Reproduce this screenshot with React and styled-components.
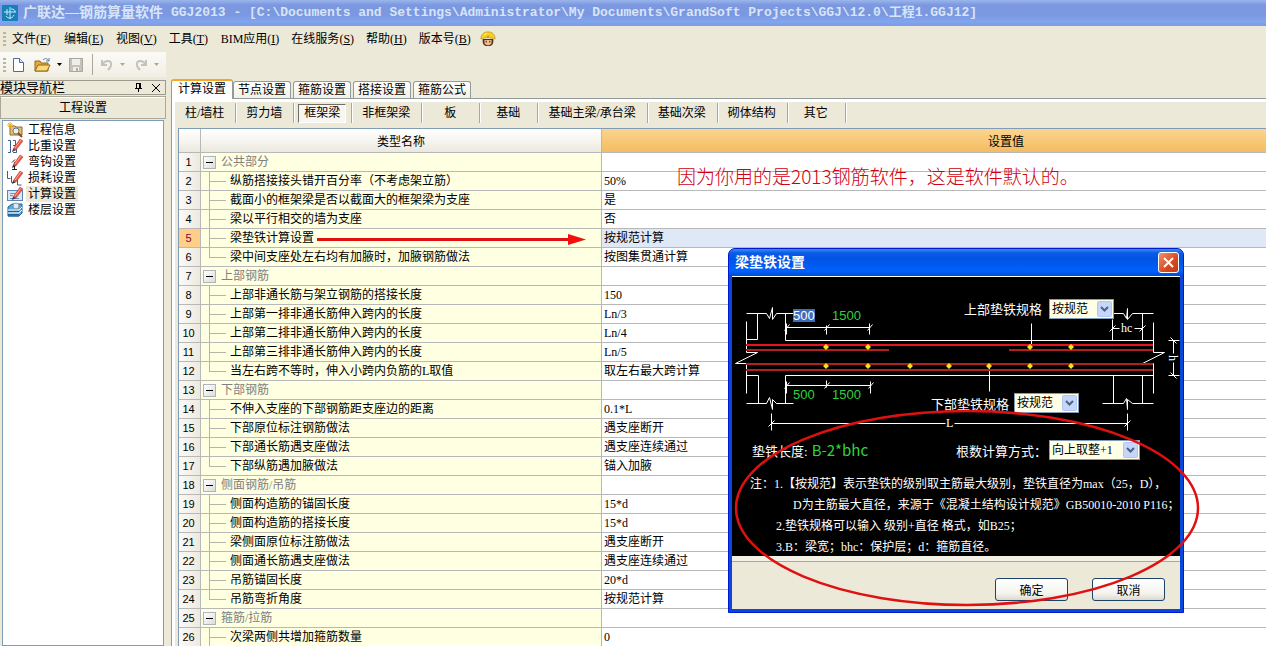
import React from "react";
import styled, { createGlobalStyle, css } from "styled-components";

const GlobalStyle = createGlobalStyle`
  * {
    box-sizing: border-box;
  }

  body {
    margin: 0;
    overflow: hidden;
    background-color: #ece9d8;
  }

  body, button, input, select {
    font-family: "Liberation Serif", "Noto Sans CJK SC", serif;
    font-size: 12px;
    color: #000;
  }
`;

const Window = styled.div`
  position: relative;
  width: 100%;
  height: 100vh;
  overflow: hidden;
  display: flex;
  flex-direction: column;
`;

const TitleBar = styled.header`
  flex: none;
  height: 26px;
  display: flex;
  align-items: center;
  gap: 5px;
  padding-left: 2px;
  background: linear-gradient(
    #9bb6ec 0,
    #7b98e0 5px,
    #7a97e0 14px,
    #82a4ee 22px,
    #7b9ae2 26px
  );
  color: #d8e4f8;
  white-space: nowrap;
`;

const AppName = styled.span`
  font-size: 14px;
  line-height: 20px;
  font-weight: 700;
`;

const AppPath = styled.span`
  padding-left: 3px;
  font-family: "Liberation Mono", "Noto Sans CJK SC", monospace;
  font-size: 13px;
  line-height: 20px;
  font-weight: 700;
  white-space: pre;
`;

const MenuBar = styled.nav`
  flex: none;
  height: 26px;
  display: flex;
  align-items: center;
  padding-left: 3px;
`;

const Grip = styled.span`
  width: 3px;
  height: 14px;
  background: repeating-linear-gradient(#b9b5a2 0 2px, transparent 2px 4px);
`;

const MenuButton = styled.button`
  min-width: 52px;
  padding: 0 6px;
  border: 0;
  background: none;
  text-align: left;
  line-height: 20px;
  white-space: nowrap;
`;

const HelperButton = styled.button`
  margin-left: 3px;
  padding: 0;
  border: 0;
  background: none;
  display: flex;
`;

const ToolBar = styled.div`
  flex: none;
  align-self: flex-start;
  height: 25px;
  width: 166px;
  display: flex;
  align-items: center;
  padding-left: 3px;
  background: linear-gradient(#fbfaf7, #f1efe4);
`;

const ToolButton = styled.button`
  width: ${({ $wide }) => ($wide ? "34px" : "24px")};
  height: 22px;
  padding: 0 0 0 4px;
  border: 0;
  background: none;
  display: flex;
  align-items: center;
  gap: 5px;
`;

const ToolDivider = styled.span`
  width: 1px;
  height: 21px;
  margin: 0 2px 0 4px;
  background-color: #aca899;
`;

const Body = styled.div`
  flex: 1;
  min-height: 0;
  display: flex;
  gap: 5px;
  padding-top: 3px;
`;

const SidePanel = styled.aside`
  flex: none;
  width: 166px;
  display: flex;
  flex-direction: column;
  gap: 1px;
`;

const SideHeader = styled.div`
  height: 15px;
  display: flex;
  align-items: center;
  border: 1px solid #9c9a8c;
  border-left: 0;
  line-height: 13px;
`;

const SideTitle = styled.span`
  flex: 1;
  font-size: 13px;
`;

const SideIcon = styled.button`
  width: 18px;
  height: 13px;
  padding: 0;
  border: 0;
  background: none;
  display: flex;
  align-items: center;
  justify-content: center;
`;

const SideGroup = styled.button`
  height: 23px;
  padding: 0;
  border: 1px solid #aca899;
  background-color: #ece9d8;
  box-shadow: inset 0 1px #fff;
  line-height: 20px;
`;

const SideList = styled.ul`
  flex: 1;
  margin: 0 2px;
  padding: 1px 0 0 4px;
  list-style: none;
  background-color: #fff;
  border: 1px solid #7f9db9;
`;

const SideItem = styled.li`
  height: 16px;
  display: flex;
  align-items: center;
  gap: 3px;
`;

const SideLink = styled.a`
  padding: 0 2px;
  line-height: 16px;
  color: #000;
  text-decoration: none;
  background-color: ${({ $active }) => ($active ? "#ece9d8" : "transparent")};
`;

const Content = styled.main`
  flex: 1;
  min-width: 0;
  display: flex;
  flex-direction: column;
`;

const Tabs = styled.div`
  flex: none;
  display: flex;
  align-items: flex-end;
  gap: 2px;
  height: 18px;
`;

const Tab = styled.button`
  height: 17px;
  padding: 0 4px;
  border: 1px solid #919b9c;
  border-bottom: 0;
  border-radius: 3px 3px 0 0;
  background: linear-gradient(#fff, #f1f0e8);
  line-height: 16px;
  white-space: nowrap;

  ${({ $active }) =>
    $active &&
    css`
      height: 20px;
      margin: 0 -2px -1px 0;
      padding: 0 6px 2px;
      border-top: 2px solid #f5a623;
      background: #fff;
      z-index: 1;
    `}
`;

const TabPage = styled.section`
  flex: 1;
  min-height: 0;
  display: flex;
  flex-direction: column;
  border: 1px solid #919b9c;
  border-width: 1px 0 0 1px;
  box-shadow: inset 3px 3px #fff;
  padding: 3px 0 0 3px;
`;

const SubNav = styled.div`
  flex: none;
  height: 26px;
  display: flex;
  align-items: center;
  padding-bottom: 4px;
`;

const SubCell = styled.div`
  min-width: 58px;
  height: 20px;
  display: flex;
  align-items: center;
  justify-content: center;
  padding: 0 4px 0 3px;
  border-right: 1px solid #aca899;
  box-shadow: 1px 0 #fff;
`;

const SubButton = styled.button`
  height: 19px;
  padding: 0 6px;
  border: 1px solid transparent;
  background: none;
  line-height: 17px;
  white-space: nowrap;

  ${({ $active }) =>
    $active &&
    css`
      padding: 0 5px;
      border-color: #716f64 #fff #fff #716f64;
      background-color: #f7f6f0;
    `}
`;

const GridFrame = styled.div`
  flex: 1;
  min-height: 0;
  overflow: hidden;
  margin-left: 3px;
  border: 1px solid #7f9db9;
  border-width: 1px 0 0 1px;
  background-color: #fff;
`;

const Grid = styled.table`
  width: 100%;
  table-layout: fixed;
  border-collapse: separate;
  border-spacing: 0;
`;

const NumberCol = styled.col`
  width: 22px;
`;

const NameCol = styled.col`
  width: 401px;
`;

const HeadCell = styled.th`
  height: 24px;
  padding: 0;
  font-weight: 400;
  border-right: 1px solid #b8b8b8;
  border-bottom: 1px solid #b8b8b8;
  background: linear-gradient(#fff, #f6f5f0 50%, #ebe9dd);

  ${({ $accent }) =>
    $accent &&
    css`
      padding-left: 144px;
      border-right: 0;
      background: linear-gradient(#fbd48e, #f3bd60);
    `}
`;

const cell = css`
  height: 19px;
  padding: 0;
  border-right: 1px solid #b8b8b8;
  border-bottom: 1px solid #b8b8b8;
  line-height: 18px;
  white-space: nowrap;
`;

const NumberCell = styled.th`
  ${cell}
  padding-right: 2px;
  font-family: "Liberation Sans", sans-serif;
  font-size: 11px;
  font-weight: 400;
  text-align: center;
  color: ${({ $active }) => ($active ? "#800040" : "#000")};
  background: ${({ $active }) =>
    $active ? "#ffcf88" : "linear-gradient(90deg, #fbfaf8, #eceadf)"};
`;

const NameCell = styled.td`
  ${cell}
  background-color: #ffffe1;
`;

const ValueCell = styled.td`
  ${cell}
  padding-left: 2px;
  border-right: 0;
  background-color: ${({ $active }) => ($active ? "#dfe8f6" : "#fff")};
`;

const NameRow = styled.div`
  height: 18px;
  display: flex;
  align-items: center;
  color: ${({ $group }) => ($group ? "#808080" : "#000")};
`;

const Toggle = styled.button`
  width: 13px;
  height: 13px;
  margin: 0 5px 0 2px;
  padding: 0;
  border: 1px solid #aeb4bc;
  background: linear-gradient(135deg, #fff, #dcdcdc);
  display: flex;
  align-items: center;
  justify-content: center;

  &::after {
    content: "";
    width: 7px;
    height: 1px;
    background-color: #000;
  }
`;

const Branch = styled.span`
  width: 17px;
  height: 100%;
  margin: 0 4px 0 8px;
  background: linear-gradient(#b4b4a8, #b4b4a8) 0 0 / 1px
      ${({ $last }) => ($last ? "9px" : "100%")} no-repeat,
    linear-gradient(#b4b4a8, #b4b4a8) 0 9px / 100% 1px no-repeat;
`;

const Remark = styled.p`
  position: absolute;
  left: 677px;
  top: 163px;
  margin: 0;
  font-family: "Noto Sans CJK SC", sans-serif;
  font-size: 19px;
  line-height: 26px;
  font-weight: 300;
  color: #d00010;
  white-space: nowrap;
`;

const Markup = styled.svg`
  position: absolute;
  left: 0;
  top: 0;
  pointer-events: none;
`;

const Dialog = styled.div`
  position: absolute;
  left: 728px;
  top: 248px;
  width: 456px;
  display: flex;
  flex-direction: column;
  padding: 0 3px 3px;
  border: 1px solid #0019cf;
  border-radius: 7px 7px 0 0;
  background-color: #0a48dc;
`;

const DialogTitle = styled.div`
  height: 27px;
  margin: 0 -3px;
  display: flex;
  align-items: center;
  justify-content: space-between;
  padding: 0 4px 0 6px;
  border-radius: 6px 6px 0 0;
  background: linear-gradient(
    #3f8cf3 0,
    #0a5be8 4px,
    #0054e3 10px,
    #0061fc 22px,
    #0049d4 27px
  );
  color: #fff;
  font-size: 14px;
  line-height: 20px;
  font-weight: 700;
`;

const CloseButton = styled.button`
  width: 21px;
  height: 21px;
  padding: 0;
  border: 1px solid #fff;
  border-radius: 3px;
  background: linear-gradient(135deg, #f0916f, #d8481f 60%, #c23a12);
  display: flex;
  align-items: center;
  justify-content: center;
`;

const Board = styled.div`
  position: relative;
  border-top: 1px solid #fff;
  background-color: #000;
  color: #fff;
`;

const Drawing = styled.svg`
  display: block;
  width: 100%;
  height: 158px;
`;

const Placed = styled.div`
  position: absolute;
  left: ${({ $x }) => $x}px;
  top: ${({ $y }) => $y}px;
`;

const SelectBox = styled.div`
  position: relative;
  width: ${({ $wide }) => ($wide ? "91px" : "65px")};

  svg {
    position: absolute;
    right: 2px;
    top: 2px;
    pointer-events: none;
  }
`;

const Select = styled.select`
  display: block;
  width: 100%;
  height: 20px;
  padding: 0 0 0 2px;
  border: 1px solid #7f9db9;
  border-radius: 0;
  background-color: #ffffe8;
  appearance: none;
`;

const Fields = styled.div`
  display: flex;
  align-items: center;
  height: 30px;
  padding-left: 20px;
  font-size: 13px;
`;

const LengthField = styled.div`
  width: 204px;
  display: flex;
  align-items: center;
  gap: 4px;
`;

const LengthInput = styled.input`
  width: 90px;
  padding: 0;
  border: 0;
  background: none;
  color: #2fd43a;
  font-family: "Noto Sans CJK SC", sans-serif;
  font-size: 15px;
  line-height: 20px;
`;

const MethodLabel = styled.label`
  width: 93px;
`;

const Notes = styled.div`
  height: 91px;
  padding: 9px 0 0 18px;
`;

const Note = styled.p`
  margin: 0;
  padding-left: ${({ $indent }) => $indent || 0}px;
  line-height: 21px;
  white-space: pre;
`;

const DialogFooter = styled.div`
  display: flex;
  justify-content: flex-end;
  gap: 24px;
  padding: 17px 15px 8px;
  border-top: 5px solid #f3f1e6;
  box-shadow: inset 0 1px #aca899;
  background-color: #ece9d8;
`;

const DialogButton = styled.button`
  width: 73px;
  height: 23px;
  padding: 0;
  border: 1px solid #1c4468;
  border-radius: 3px;
  background: linear-gradient(#fff, #f4f3ee 70%, #dcd8cc);
`;

const menus = [
  ["文件", "F"],
  ["编辑", "E"],
  ["视图", "V"],
  ["工具", "T"],
  ["BIM应用", "I"],
  ["在线服务", "S"],
  ["帮助", "H"],
  ["版本号", "B"],
];

const tabs = ["计算设置", "节点设置", "箍筋设置", "搭接设置", "箍筋公式"];

const parts = [
  "柱/墙柱",
  "剪力墙",
  "框架梁",
  "非框架梁",
  "板",
  "基础",
  "基础主梁/承台梁",
  "基础次梁",
  "砌体结构",
  "其它",
];

const groups = [
  {
    name: "公共部分",
    rows: [
      ["纵筋搭接接头错开百分率（不考虑架立筋）", "50%"],
      ["截面小的框架梁是否以截面大的框架梁为支座", "是"],
      ["梁以平行相交的墙为支座", "否"],
      ["梁垫铁计算设置", "按规范计算"],
      ["梁中间支座处左右均有加腋时，加腋钢筋做法", "按图集贯通计算"],
    ],
  },
  {
    name: "上部钢筋",
    rows: [
      ["上部非通长筋与架立钢筋的搭接长度", "150"],
      ["上部第一排非通长筋伸入跨内的长度", "Ln/3"],
      ["上部第二排非通长筋伸入跨内的长度", "Ln/4"],
      ["上部第三排非通长筋伸入跨内的长度", "Ln/5"],
      ["当左右跨不等时，伸入小跨内负筋的L取值", "取左右最大跨计算"],
    ],
  },
  {
    name: "下部钢筋",
    rows: [
      ["不伸入支座的下部钢筋距支座边的距离", "0.1*L"],
      ["下部原位标注钢筋做法", "遇支座断开"],
      ["下部通长筋遇支座做法", "遇支座连续通过"],
      ["下部纵筋遇加腋做法", "锚入加腋"],
    ],
  },
  {
    name: "侧面钢筋/吊筋",
    rows: [
      ["侧面构造筋的锚固长度", "15*d"],
      ["侧面构造筋的搭接长度", "15*d"],
      ["梁侧面原位标注筋做法", "遇支座断开"],
      ["侧面通长筋遇支座做法", "遇支座连续通过"],
      ["吊筋锚固长度", "20*d"],
      ["吊筋弯折角度", "按规范计算"],
    ],
  },
  {
    name: "箍筋/拉筋",
    rows: [["次梁两侧共增加箍筋数量", "0"]],
  },
];

// flat list of table rows, group heads included
const rows = groups.flatMap(({ name, rows: items }) => [
  { name, group: true, value: "" },
  ...items.map(([label, value], i) => ({
    name: label,
    value,
    last: items.length > 1 && i === items.length - 1,
  })),
]);

const Pencil = () => (
  <>
    <path d="M6 11L13 1L16 3L9 12Z" fill="#e8574a" stroke="#b5362c" strokeWidth=".5" />
    <path d="M6 11L9 12L5 14Z" fill="#333" />
    <path d="M8 10L14 2" stroke="#f7a79c" />
  </>
);

const sideItems = [
  {
    label: "工程信息",
    icon: (
      <>
        <path d="M3 4h5l1 1h6v8H3z" fill="#e2bf72" stroke="#8f6d2d" />
        <path d="M0 3h6M3 0v6M1 1l4 4M5 1L1 5" stroke="#f0b51c" />
        <circle cx="9" cy="9" r="3" fill="#e6f2fb" stroke="#6d7780" />
        <path d="M11 11l4 4" stroke="#8a4a1c" strokeWidth="2" />
      </>
    ),
  },
  {
    label: "比重设置",
    icon: (
      <>
        <path d="M1 2.500h2.500v12H1M6 2.500h2.500v5H6M6 14.500h3.500V9" fill="none" stroke="#3d5c8c" />
        <Pencil />
      </>
    ),
  },
  {
    label: "弯钩设置",
    icon: (
      <>
        <path d="M7.500 8v7M5 15.500h5M5 8.500l3-3" fill="none" stroke="#222" />
        <Pencil />
      </>
    ),
  },
  {
    label: "损耗设置",
    icon: (
      <>
        <path d="M.5 1v7.500h3M4.500 6v6.500h3M10.500 9v6h4" fill="none" stroke="#3d5c8c" />
        <Pencil />
      </>
    ),
  },
  {
    label: "计算设置",
    icon: (
      <>
        <rect x=".5" y="4.500" width="15" height="10" fill="#d7e7fa" stroke="#5d84b8" />
        <path d="M3 7.500h5M3 9.500h3M3 12.500h9" stroke="#6f93c4" />
        <Pencil />
      </>
    ),
  },
  {
    label: "楼层设置",
    icon: (
      <>
        <path d="M1 5l4-3h10v9l-3 3H1z" fill="#5aa5d8" stroke="#1f5f98" />
        <path d="M1 8h11l3-3M1 11h11l3-3" fill="none" stroke="#fff" />
        <path d="M1 14h11l3-3M1 9.500h11M1 12.500h11" fill="none" stroke="#1f5f98" />
        <circle cx="9" cy="4" r="3" fill="#dbe9f5" stroke="#8797a6" />
      </>
    ),
  },
];

const AppIcon = () => (
  <svg width="16" height="16" viewBox="0 0 16 16">
    <rect width="16" height="16" rx="1" fill="#1780b8" />
    <path d="M8 2v12M2 7h12M5 4v6M4 11c2 3 6 3 8-1M9 4c3 0 4 1 4 3" fill="none" stroke="#c5ecf6" />
  </svg>
);

const Worker = () => (
  <svg width="16" height="16" viewBox="0 0 18 18">
    <path d="M3 9h12v3c0 3-2 5-6 5s-6-2-6-5z" fill="#5a2d18" />
    <path d="M5 10h8v3c0 2-2 3-4 3s-4-1-4-3z" fill="#f0bf94" />
    <path d="M7 11v2M11 11v2" stroke="#2a1408" />
    <path d="M1 9C1 4 4 1 9 1s8 3 8 8c-4-2-12-2-16 0z" fill="#f5d21e" stroke="#b8860b" strokeWidth=".7" />
    <path d="M5 4c1-1 2-1 3-1" stroke="#fff8b8" fill="none" />
    <path d="M8 6h2" stroke="#c43" />
  </svg>
);

const Caret = ({ muted }) => (
  <svg width="5" height="3" viewBox="0 0 5 3">
    <path d="M0 0h5L2.500 3z" fill={muted ? "#aca899" : "#000"} />
  </svg>
);

const ComboArrow = () => (
  <svg width="15" height="16" viewBox="0 0 15 16">
    <rect x=".5" y=".5" width="14" height="15" rx="1" fill="#c6d6fb" stroke="#b3c6f2" />
    <path d="M4 6l3.500 3.500L11 6" fill="none" stroke="#4d6185" strokeWidth="2" />
  </svg>
);

const Combo = ({ id, label, value, wide }) => (
  <SelectBox $wide={wide}>
    <Select id={id} aria-label={label} defaultValue={value}>
      <option>{value}</option>
    </Select>
    <ComboArrow />
  </SelectBox>
);

const upperDots = [94, 136, 298, 339];
const lowerDots = [94, 136, 178, 217, 257, 298, 339];

const Dot = ({ x, y }) => (
  <path d={`M${x - 3} ${y}l3 -3l3 3l-3 3z`} fill="#ffe11a" />
);

const BeamDrawing = () => (
  <Drawing viewBox="0 0 448 158">
    <g fill="none" stroke="#fff" transform="translate(.5 .5)">
      {/* left column */}
      <path d="M14 36H34L37 41L40 30V42L44 36H61M25 36V62H14" />
      <path d="M14 44V75H25L3 86H14V116" />
      <path d="M14 98H26V126M14 126H34L37 120L40 132V122L44 126H61" />
      {/* beam faces */}
      <path d="M53 36V63H421M53 126V98H421" />
      {/* right column */}
      <path d="M374 36H391L394 41L395 31V42L400 36H421M380 42V63M410 36V63" />
      <path d="M421 45V75H432L410 86H421V116" />
      <path d="M370 126H391L394 121L395 132V122L400 126H421M381 98V126M410 98V126" />
      {/* dimensions */}
      <path d="M54 50H137M54 46V57M94 48V57M137 46V57M52 53l5 -6M92 53l5 -6M135 53l5 -6" />
      <path d="M54 108H138M54 104V116M94 103V110M138 104V116M52 111l5 -6M92 111l5 -6M136 111l5 -6" />
      <path d="M39 146H213M222 146H395M39 136V153M395 136V153M36 149l6 -6M392 149l6 -6" />
      <path d="M380 51H387M402 51H410M377 54l6 -6M407 54l6 -6" />
      <path d="M441 63V76M441 85V98M436 63H447M436 98H447M438 60l6 6M438 95l6 6" />
      <path d="M299 46V69M257 90V114" />
    </g>
    <g strokeWidth="2">
      <path d="M14 68H421" stroke="#e8141c" />
      <path d="M14 73H157M277 73H421M14 87H421M14 93H421" stroke="#b0201f" />
    </g>
    {upperDots.map((x) => (
      <Dot key={x} x={x} y={70} />
    ))}
    {lowerDots.map((x) => (
      <Dot key={x} x={x} y={89} />
    ))}
    <rect x="61" y="32" width="22" height="13" fill="#3e6cb8" />
    <g fontFamily="Liberation Sans" fontSize="13" fill="#2fd43a">
      <text x="61" y="43" fill="#fff">500</text>
      <text x="100" y="43">1500</text>
      <text x="61" y="122">500</text>
      <text x="100" y="122">1500</text>
    </g>
    <g fontSize="13" fill="#fff">
      <text x="232" y="37">上部垫铁规格</text>
      <text x="199" y="132">下部垫铁规格</text>
    </g>
    <g fontSize="12" fill="#fff">
      <text x="389" y="55">hc</text>
      <text x="214" y="150">L</text>
      <text x="0" y="0" transform="translate(437 78) rotate(90)">h</text>
    </g>
  </Drawing>
);

const BeamDialog = () => (
  <Dialog role="dialog" aria-labelledby="dialog-title">
    <DialogTitle>
      <span id="dialog-title">梁垫铁设置</span>
      <CloseButton aria-label="关闭">
        <svg width="13" height="13" viewBox="0 0 13 13">
          <path d="M2 2l9 9M11 2l-9 9" stroke="#fff" strokeWidth="2" />
        </svg>
      </CloseButton>
    </DialogTitle>
    <Board>
      <BeamDrawing />
      <Placed $x={317} $y={22}>
        <Combo label="上部垫铁规格" value="按规范" />
      </Placed>
      <Placed $x={282} $y={116}>
        <Combo label="下部垫铁规格" value="按规范" />
      </Placed>
      <Fields>
        <LengthField>
          <label htmlFor="length">垫铁长度:</label>
          <LengthInput id="length" defaultValue="B-2*bhc" />
        </LengthField>
        <MethodLabel htmlFor="method">根数计算方式：</MethodLabel>
        <Combo id="method" value="向上取整+1" wide />
      </Fields>
      <Notes>
        <Note>注：1.【按规范】表示垫铁的级别取主筋最大级别，垫铁直径为max（25，D），</Note>
        <Note $indent={43}>D为主筋最大直径，来源于《混凝土结构设计规范》GB50010-2010 P116；</Note>
        <Note $indent={26}>2.垫铁规格可以输入 级别+直径 格式，如B25；</Note>
        <Note $indent={26}>3.B：梁宽；bhc：保护层；d：箍筋直径。</Note>
      </Notes>
    </Board>
    <DialogFooter>
      <DialogButton>确定</DialogButton>
      <DialogButton>取消</DialogButton>
    </DialogFooter>
  </Dialog>
);

const SettingsGrid = () => (
  <GridFrame>
    <Grid>
      <colgroup>
        <NumberCol />
        <NameCol />
        <col />
      </colgroup>
      <thead>
        <tr>
          <HeadCell />
          <HeadCell>类型名称</HeadCell>
          <HeadCell $accent>设置值</HeadCell>
        </tr>
      </thead>
      <tbody>
        {rows.map((row, i) => (
          <tr key={i}>
            <NumberCell scope="row" $active={i === 4}>
              {i + 1}
            </NumberCell>
            <NameCell>
              <NameRow $group={row.group}>
                {row.group ? (
                  <Toggle aria-label="折叠" />
                ) : (
                  <Branch $last={row.last} />
                )}
                {row.name}
              </NameRow>
            </NameCell>
            <ValueCell $active={i === 4}>{row.value}</ValueCell>
          </tr>
        ))}
      </tbody>
    </Grid>
  </GridFrame>
);

const App = () => (
  <Window>
    <GlobalStyle />
    <TitleBar>
      <AppIcon />
      <AppName>广联达—钢筋算量软件</AppName>
      <AppPath>
        {
          "GGJ2013 - [C:\\Documents and Settings\\Administrator\\My Documents\\GrandSoft Projects\\GGJ\\12.0\\工程1.GGJ12]"
        }
      </AppPath>
    </TitleBar>
    <MenuBar>
      <Grip />
      {menus.map(([label, key]) => (
        <MenuButton key={key}>
          {label}(<u>{key}</u>)
        </MenuButton>
      ))}
      <HelperButton aria-label="助手">
        <Worker />
      </HelperButton>
    </MenuBar>
    <ToolBar>
      <Grip />
      <ToolButton aria-label="新建">
        <svg width="16" height="16" viewBox="0 0 16 16">
          <path d="M3.500 1.500h6l4 4v9h-10z" fill="#fff" stroke="#4a6a9c" />
          <path d="M9.500 1.500v4h4" fill="#d5e3f5" stroke="#4a6a9c" />
        </svg>
      </ToolButton>
      <ToolButton aria-label="打开" $wide>
        <svg width="18" height="16" viewBox="0 0 18 16">
          <path d="M1 4h5l1 2h7v8H1z" fill="#e0ac3c" stroke="#94691b" />
          <path d="M1 14l3-6h12l-3 6z" fill="#fbd978" stroke="#94691b" />
          <path d="M9 3c2-2 4-2 6 1M15 1v3h-3" fill="none" stroke="#5b7ea8" />
        </svg>
        <Caret />
      </ToolButton>
      <ToolButton aria-label="保存" disabled>
        <svg width="16" height="16" viewBox="0 0 16 16">
          <path d="M1.500 1.500h13v13h-13z" fill="#c4c2ba" stroke="#aaa79c" />
          <path d="M4 2h8v6H4zM5 10h6v4H5z" fill="#efeee9" />
          <path d="M8 11h2v3H8z" fill="#b0aea5" />
        </svg>
      </ToolButton>
      <ToolDivider />
      <ToolButton aria-label="撤销" $wide disabled>
        <svg width="16" height="16" viewBox="0 0 16 16">
          <path d="M3 3v5h5M3 8c3-5 8-5 9-2c1 3-1 5-3 7" fill="none" stroke="#c4c2ba" strokeWidth="2" />
        </svg>
        <Caret muted />
      </ToolButton>
      <ToolButton aria-label="重做" $wide disabled>
        <svg width="16" height="16" viewBox="0 0 16 16">
          <path d="M13 3v5H8M13 8c-3-5-8-5-9-2c-1 3 1 5 3 7" fill="none" stroke="#c4c2ba" strokeWidth="2" />
        </svg>
        <Caret muted />
      </ToolButton>
    </ToolBar>
    <Body>
      <SidePanel>
        <SideHeader>
          <SideTitle>模块导航栏</SideTitle>
          <SideIcon aria-label="固定">
            <svg width="9" height="9" viewBox="0 0 9 9">
              <path d="M2.500 0v5M1 5.500h7M4.500 6v3M2 .5h4" stroke="#000" />
              <path d="M6 0v5" stroke="#000" strokeWidth="2" />
            </svg>
          </SideIcon>
          <SideIcon aria-label="关闭">
            <svg width="8" height="8" viewBox="0 0 8 8">
              <path d="M0 0l8 8M8 0L0 8" stroke="#000" />
            </svg>
          </SideIcon>
        </SideHeader>
        <SideGroup>工程设置</SideGroup>
        <SideList>
          {sideItems.map(({ label, icon }) => (
            <SideItem key={label}>
              <svg width="16" height="16" viewBox="0 0 16 16">
                {icon}
              </svg>
              <SideLink href="#" $active={label === "计算设置"}>
                {label}
              </SideLink>
            </SideItem>
          ))}
        </SideList>
      </SidePanel>
      <Content>
        <Tabs>
          {tabs.map((tab, i) => (
            <Tab key={tab} $active={i === 0}>
              {tab}
            </Tab>
          ))}
        </Tabs>
        <TabPage>
          <SubNav>
            {parts.map((part) => (
              <SubCell key={part}>
                <SubButton $active={part === "框架梁"}>{part}</SubButton>
              </SubCell>
            ))}
          </SubNav>
          <SettingsGrid />
        </TabPage>
      </Content>
    </Body>
    <Remark>因为你用的是2013钢筋软件，这是软件默认的。</Remark>
    <BeamDialog />
    <Markup width="1266" height="646">
      <path d="M317 239.500H569" stroke="#e01010" strokeWidth="3" />
      <path d="M568 234L586 239.500L568 245Z" fill="#f01010" />
      <ellipse cx="967" cy="508" rx="231" ry="97" fill="none" stroke="#e01010" strokeWidth="2.500" />
    </Markup>
  </Window>
);

export default App;
